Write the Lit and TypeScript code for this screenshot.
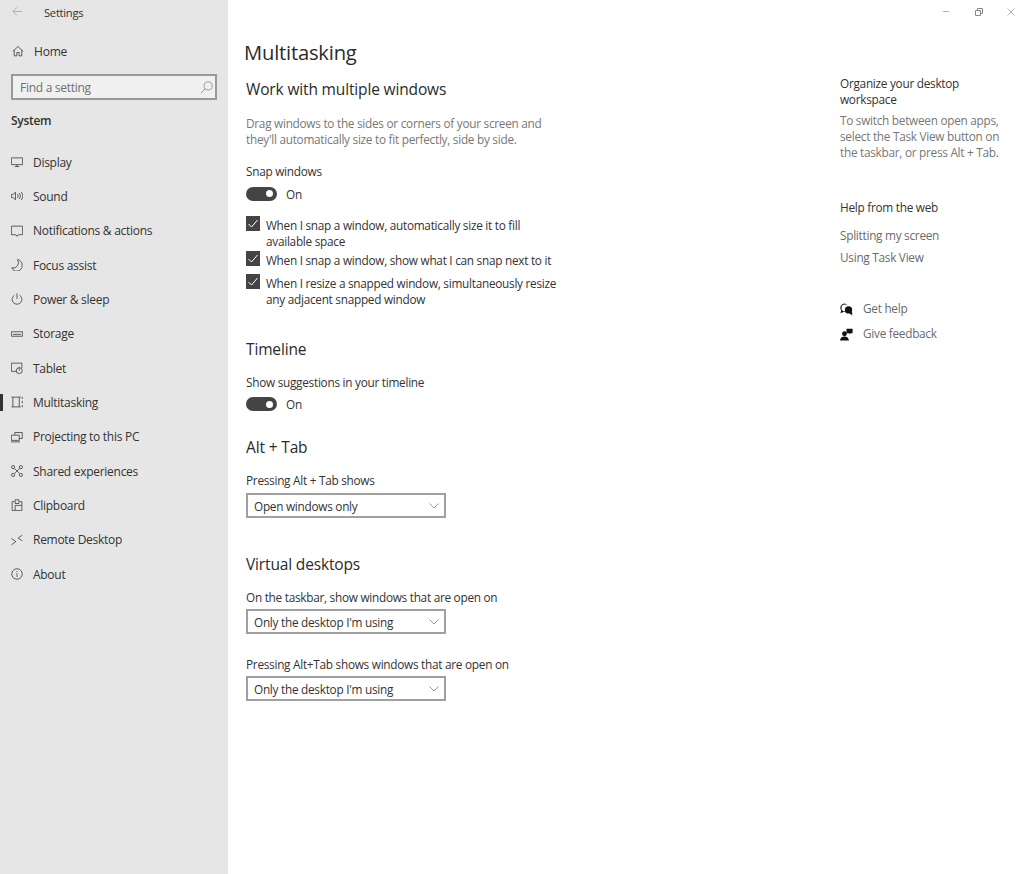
import { LitElement, html, css, svg } from "lit";
import { customElement } from "lit/decorators.js";

const s = (body: unknown) => html`<svg class="ico" viewBox="0 0 16 16" fill="none" stroke="currentColor" stroke-width="1">${body}</svg>`;
const icons: Record<string, unknown> = {
  home: s(svg`<path d="M1 8.500 8 2l7 6.500M3 7v7.500h3.500V10h3v4.500H13V7"/>`),
  display: s(svg`<path d="M.5 2.500h15v9H.5zM8 11.500v2.500M5 14h6"/>`),
  sound: s(svg`<path d="M.5 6v4h2l3.500 3V3L2.500 6zM8.500 5.500a3.500 3.500 0 0 1 0 5M11 4a6 6 0 0 1 0 8M13.500 2.500a8.500 8.500 0 0 1 0 11"/>`),
  notif: s(svg`<path d="M.5 1.500h15v11.500H9.500L8 15l-1.500-2H.5z"/>`),
  focus: s(svg`<path d="M8.500.8a7 7 0 0 1-7.500 11A7.200 7.200 0 0 0 14.800 9 7.200 7.200 0 0 0 8.500.8z"/>`),
  power: s(svg`<path d="M8 .5v7.500M4.500 3a6.500 6.500 0 1 0 7 0"/>`),
  storage: s(svg`<path d="M.5 5h15v6H.5zM2.500 8.500h11"/>`),
  tablet: s(svg`<path d="M8 12.500H.5v-11h14V8"/><circle cx="11" cy="11.500" r="4"/><path d="M11 7.500v4"/>`),
  multi: s(svg`<path d="M.5 1.500h12.500M.5 14.500h12.500M2.500 1.500v13M11 1.500v13M15 1v3M15 6.500v3M15 12v3"/>`),
  project: s(svg`<path d="M5 5V2h10v8h-4M.5 5.500h10.500v7H.5zM0 14.500h12"/>`),
  shared: s(svg`<circle cx="2.800" cy="2.800" r="2.100"/><circle cx="13.200" cy="2.800" r="2.100"/><circle cx="2.800" cy="13.200" r="2.100"/><circle cx="13.200" cy="13.200" r="2.100"/><path d="M4.500 4.500l7 7M11.500 4.500l-7 7"/>`),
  clipboard: s(svg`<path d="M4.500 3.500h-3v12h13v-12h-3M5.500 1h5v5h-5zM5.500 15V8.500h9"/>`),
  remote: s(svg`<path d="M.5 6l6 4-6 4.500M15 1.500 9.500 5.500 15 9"/>`),
  about: s(svg`<circle cx="8" cy="8" r="7"/><path d="M8 7v5M8 4.200v1.300"/>`),
};

const nav: [string, string][] = [
  ["display", "Display"], ["sound", "Sound"], ["notif", "Notifications & actions"],
  ["focus", "Focus assist"], ["power", "Power & sleep"], ["storage", "Storage"],
  ["tablet", "Tablet"], ["multi", "Multitasking"], ["project", "Projecting to this PC"],
  ["shared", "Shared experiences"], ["clipboard", "Clipboard"], ["remote", "Remote Desktop"], ["about", "About"],
];

@customElement("app-root")
export class AppRoot extends LitElement {
  static styles = css`
    :host { display: block; width: 1024px; height: 874px; overflow: hidden; background: #fff; color: #333;
      font-family: "Open Sans", "Noto Sans", sans-serif; font-size: 11.8px; letter-spacing: -0.27px; }
    .app { display: flex; height: 874px; }
    .side { width: 228px; flex: none; background: #e6e6e6; display: flex; flex-direction: column; }
    .top { display: flex; align-items: center; height: 25px; padding-left: 12px; font-size: 11.2px; }
    .back { width: 11px; height: 11px; color: #aaa; margin-right: 21px; margin-top: -2px; }
    .home { display: flex; align-items: center; height: 20px; margin-top: 16px; padding-left: 12px; font-size: 12px; letter-spacing: -0.2px; gap: 10px; }
    .home .ico { width: 12px; height: 12px; }
    .search { margin: 13px 11px 0 11px; height: 26px; box-sizing: border-box; border: 2px solid #999; background: #f0f0f0;
      display: flex; align-items: center; justify-content: space-between; padding: 0 2px 0 7px; color: #6f6f6f; font-size: 12px; letter-spacing: -0.28px; }
    .search svg { width: 13px; height: 13px; color: #888; }
    .system { font-weight: 600; margin: 11px 0 0 11px; height: 20px; line-height: 20px; font-size: 12px; color: #333; letter-spacing: -0.3px; }
    ul { list-style: none; margin: 14px 0 0; padding: 0; }
    li { display: flex; align-items: center; height: 34.33px; padding-left: 11px; position: relative; gap: 10px; font-size: 12px; letter-spacing: -0.28px; }
    li .ico { width: 12px; height: 12px; flex: none; }
    li.on::before { content: ""; position: absolute; left: 0; top: 9px; width: 3px; height: 17px; background: #333; }
    .main { flex: 1; min-width: 0; position: relative; padding: 0 0 0 18px; display: flex; }
    .col { width: 594px; flex: none; display: flex; flex-direction: column; align-items: flex-start; }
    h1 { font-weight: 400; font-size: 20.2px; line-height: 28px; margin: 38px 0 0 -2px; color: #2b2b2b; letter-spacing: -0.2px; }
    h2 { font-weight: 400; font-size: 15.500px; line-height: 22px; margin: 0; color: #2b2b2b; letter-spacing: -0.15px; }
    p { margin: 0; line-height: 16px; }
    .muted { color: #777; }
    .toggle { display: flex; align-items: center; gap: 9px; height: 16px; }
    .track { width: 31px; height: 14px; background: #444; border-radius: 8px; position: relative; }
    .track::after { content: ""; position: absolute; right: 4px; top: 3.500px; width: 7px; height: 7px; border-radius: 50%; background: #fff; }
    .check { display: flex; gap: 6px; width: 320px; line-height: 16px; }
    .box { width: 14px; height: 15px; background: #444; flex: none; display: flex; color: #fff; margin-top: -1px; }
    .box svg { width: 14px; height: 15px; }
    .select { width: 200px; height: 25px; box-sizing: border-box; border: 2px solid #a0a0a0; display: flex; align-items: center;
      justify-content: space-between; padding: 0 5px 0 6px; }
    .select svg { width: 10px; height: 6px; color: #999; }
    .aside { width: 170px; padding-top: 75px; line-height: 15.600px; }
    .link { color: #6b6b6b; height: 22px; line-height: 22px; }
    .help { display: flex; align-items: center; gap: 10px; height: 25px; color: #6b6b6b; }
    .help svg { width: 13px; height: 13px; color: #111; flex: none; }
    .win { position: absolute; top: 8px; right: 9px; display: flex; gap: 24.500px; color: #b0b0b0; }
    .win svg { width: 8px; height: 8px; }
  `;

  private sel(t: string) {
    return html`<div class="select"><span>${t}</span><svg viewBox="0 0 10 6" fill="none" stroke="currentColor"><path d="M.5.5 5 5 9.500.5"/></svg></div>`;
  }
  private chk(t: unknown, mt: number) {
    return html`<div class="check" style="margin-top:${mt}px"><span class="box"><svg viewBox="0 0 14 15" fill="none" stroke="currentColor" stroke-width="1"><path d="M2.500 8 5.500 11 11.500 4"/></svg></span><span>${t}</span></div>`;
  }
  private tog() {
    return html`<div class="toggle"><span class="track"></span><span>On</span></div>`;
  }

  render() {
    return html`<div class="app">
      <div class="side">
        <div class="top"><svg class="back" viewBox="0 0 12 12" fill="none" stroke="currentColor"><path d="M11 6H1M5.500 1.500 1 6l4.500 4.500"/></svg><span>Settings</span></div>
        <div class="home">${icons.home}<span>Home</span></div>
        <div class="search"><span>Find a setting</span><svg viewBox="0 0 16 16" fill="none" stroke="currentColor"><circle cx="10" cy="6" r="5"/><path d="M6.500 9.500 1 15"/></svg></div>
        <div class="system">System</div>
        <ul>${nav.map(([i, t]) => html`<li class=${t === "Multitasking" ? "on" : ""}>${icons[i]}<span>${t}</span></li>`)}</ul>
      </div>
      <div class="main">
        <div class="col">
          <h1>Multitasking</h1>
          <h2 style="margin-top:12px">Work with multiple windows</h2>
          <p class="muted" style="margin-top:15px">Drag windows to the sides or corners of your screen and<br>they'll automatically size to fit perfectly, side by side.</p>
          <p style="margin-top:16px">Snap windows</p>
          <div style="margin-top:6.500px">${this.tog()}</div>
          ${this.chk(html`When I snap a window, automatically size it to fill available space`, 15)}
          ${this.chk(html`When I snap a window, show what I can snap next to it`, 3.5)}
          ${this.chk(html`When I resize a snapped window, simultaneously resize any adjacent snapped window`, 7)}
          <h2 style="margin-top:31px">Timeline</h2>
          <p style="margin-top:14px">Show suggestions in your timeline</p>
          <div style="margin-top:6px">${this.tog()}</div>
          <h2 style="margin-top:24px">Alt + Tab</h2>
          <p style="margin-top:14px">Pressing Alt + Tab shows</p>
          <div style="margin-top:5px">${this.sel("Open windows only")}</div>
          <h2 style="margin-top:35px">Virtual desktops</h2>
          <p style="margin-top:14px">On the taskbar, show windows that are open on</p>
          <div style="margin-top:4px">${this.sel("Only the desktop I'm using")}</div>
          <p style="margin-top:22px">Pressing Alt+Tab shows windows that are open on</p>
          <div style="margin-top:4px">${this.sel("Only the desktop I'm using")}</div>
        </div>
        <div class="aside">
          <p>Organize your desktop<br>workspace</p>
          <p class="muted" style="margin-top:5px">To switch between open apps,<br>select the Task View button on<br>the taskbar, or press Alt + Tab.</p>
          <p style="margin-top:39px">Help from the web</p>
          <div class="link" style="margin-top:9px">Splitting my screen</div>
          <div class="link">Using Task View</div>
          <div class="help" style="margin-top:28.500px"><svg viewBox="0 0 16 16" fill="currentColor" fill-rule="evenodd"><path d="M6 .5a5.500 5.500 0 0 0-4.500 8.700L.5 12.500l3.800-1.300A5.500 5.500 0 0 0 6 .5zm0 1.300a4.200 4.200 0 1 1 0 8.400 4.200 4.200 0 0 1 0-8.400z"/><circle cx="10.500" cy="8.500" r="4.500"/><path d="M11 12l4 3.500V11z"/></svg><span>Get help</span></div>
          <div class="help"><svg viewBox="0 0 16 16" fill="currentColor"><circle cx="5.500" cy="7" r="3"/><path d="M0 15.500c0-3 2.500-5 5.500-5s5.500 2 5.500 5zM8 1h7.500v5.500H13L11.500 8V6.500H8z"/></svg><span>Give feedback</span></div>
        </div>
        <div class="win">
          <svg viewBox="0 0 8 8" fill="none" stroke="currentColor"><path d="M1 3.500h6"/></svg>
          <svg viewBox="0 0 8 8" fill="none" stroke="#888"><path d="M.5 2.500h5v5h-5zM2.500 2.500v-2h5v5h-2"/></svg>
          <svg viewBox="0 0 8 8" fill="none" stroke="currentColor"><path d="M.5.5l7 7M7.500.5l-7 7"/></svg>
        </div>
      </div>
    </div>`;
  }
}
